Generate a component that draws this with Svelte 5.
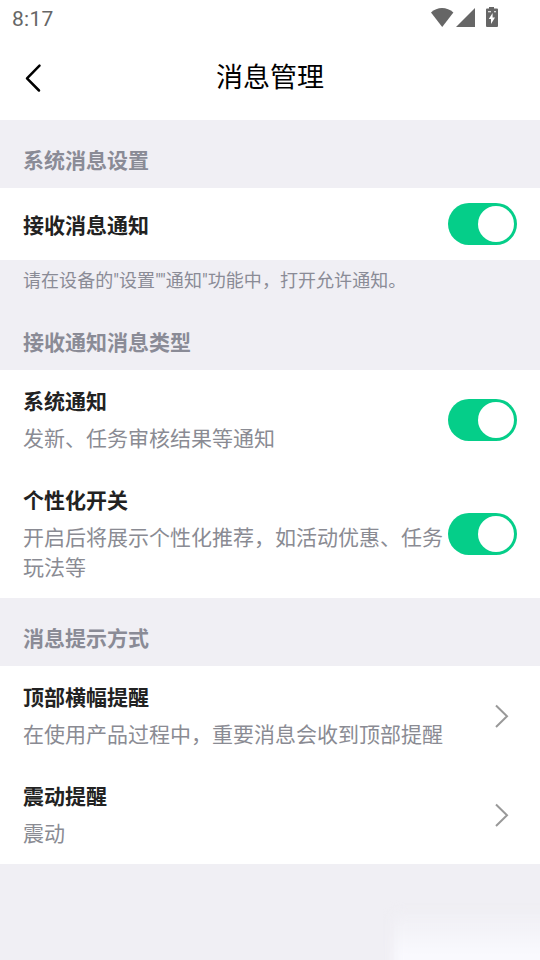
<script>
	let groups = $state([
		{
			title: "系统消息设置",
			rows: [{ name: "接收消息通知", desc: "", type: "switch", on: true }],
			note: '请在设备的"设置""通知"功能中，打开允许通知。',
		},
		{
			title: "接收通知消息类型",
			rows: [
				{ name: "系统通知", desc: "发新、任务审核结果等通知", type: "switch", on: true },
				{
					name: "个性化开关",
					desc: "开启后将展示个性化推荐，如活动优惠、任务玩法等",
					type: "switch",
					on: true,
				},
			],
			note: "",
		},
		{
			title: "消息提示方式",
			rows: [
				{ name: "顶部横幅提醒", desc: "在使用产品过程中，重要消息会收到顶部提醒", type: "link" },
				{ name: "震动提醒", desc: "震动", type: "link" },
			],
			note: "",
		},
	]);
</script>

<div class="page">
	<div class="status">
		<span class="time">8:17</span>
		<svg width="70" height="36" viewBox="0 0 70 36">
			<path d="M2 12.4C8 6.4 18 6.4 24.4 12.4L13.2 27Z" />
			<path d="M27 27H46V8Z" />
			<path
				fill-rule="evenodd"
				d="M60 7H65V8.6H68Q69 8.6 69 9.6V26Q69 27 68 27H58Q57 27 57 26V9.6Q57 8.6 58 8.6H60ZM63.6 13L59.8 19H62V24L66 17.4H63.6ZM59 11.2V12.2H62V11.2ZM65 11.2V12.2H67V11.2Z"
			/>
		</svg>
	</div>

	<header>
		<button class="back" aria-label="返回">
			<svg width="18" height="30" viewBox="0 0 18 30">
				<path d="M15.5 2.7L3 15.3L15 27.5" />
			</svg>
		</button>
		<h1>消息管理</h1>
	</header>

	{#each groups as group}
		<section>
			<h2>{group.title}</h2>
			<div class="list">
				{#each group.rows as row}
					<div class="row" class:single={!row.desc}>
						<div class="text">
							<div class="name">{row.name}</div>
							{#if row.desc}
								<div class="desc">{row.desc}</div>
							{/if}
						</div>
						{#if row.type == "switch"}
							<button
								class="switch"
								class:on={row.on}
								role="switch"
								aria-checked={row.on}
								aria-label={row.name}
								onclick={() => (row.on = !row.on)}
							></button>
						{:else}
							<svg class="arrow" width="16" height="26" viewBox="0 0 16 26">
								<path d="M2 2.5L13 13.3L2 24" />
							</svg>
						{/if}
					</div>
				{/each}
			</div>
			{#if group.note}
				<p class="note">{group.note}</p>
			{/if}
		</section>
	{/each}

	<div class="glow"></div>
</div>

<style>
	:global(body) {
		margin: 0;
	}
	.page {
		position: relative;
		height: 960px;
		overflow: hidden;
		background: #f0eff4;
		font-family: Roboto, "Noto Sans CJK SC", sans-serif;
	}
	button {
		padding: 0;
		border: none;
		background: none;
	}
	.status {
		display: flex;
		justify-content: space-between;
		height: 36px;
		padding: 0 41px 0 12px;
		background: #fff;
	}
	.time {
		font-size: 21px;
		line-height: 38px;
		letter-spacing: 0.3px;
		color: #666;
	}
	.status svg {
		fill: #666;
	}
	header {
		display: grid;
		grid-template-columns: 60px 1fr 60px;
		align-items: center;
		height: 84px;
		background: #fff;
	}
	.back {
		display: flex;
		padding-left: 24px;
	}
	.back path {
		fill: none;
		stroke: #000;
		stroke-width: 2.5;
		stroke-linecap: round;
		stroke-linejoin: round;
	}
	h1 {
		margin: 0;
		font-size: 27px;
		font-weight: 400;
		line-height: 40px;
		text-align: center;
		color: #000;
	}
	h2 {
		margin: 0;
		padding: 26px 23px 12px;
		font-size: 21px;
		font-weight: 700;
		line-height: 30px;
		color: #8a8b96;
	}
	.list {
		background: #fff;
	}
	.row {
		display: flex;
		align-items: center;
		justify-content: space-between;
		padding: 16px 23px 15px;
	}
	.row.single {
		padding: 15px 23px;
	}
	.text {
		width: 422px;
		padding-top: 1px;
	}
	.single .text {
		padding-top: 4px;
	}
	.name {
		font-size: 21px;
		font-weight: 700;
		line-height: 30px;
		color: #222;
	}
	.desc {
		margin-top: 7px;
		font-size: 21px;
		line-height: 30px;
		color: #8a8b93;
	}
	.switch {
		flex: none;
		width: 69px;
		height: 42px;
		padding: 3px;
		border-radius: 21px;
		background: #ccc;
	}
	.switch::before {
		content: "";
		display: block;
		width: 36px;
		height: 36px;
		border-radius: 50%;
		background: #fff;
	}
	.switch.on {
		background: #05ce89;
	}
	.switch.on::before {
		margin-left: auto;
	}
	.arrow {
		margin-right: 7px;
	}
	.arrow path {
		fill: none;
		stroke: #999;
		stroke-width: 2;
	}
	.note {
		margin: 0;
		padding: 7px 23px 8px;
		font-size: 18px;
		line-height: 27px;
		letter-spacing: 0.05px;
		color: #8a8b96;
	}
	.glow {
		position: absolute;
		right: -20px;
		bottom: -20px;
		width: 166px;
		height: 66px;
		background: linear-gradient(#f0eff4, #f9f9fe 60%);
		filter: blur(6px);
	}
</style>
